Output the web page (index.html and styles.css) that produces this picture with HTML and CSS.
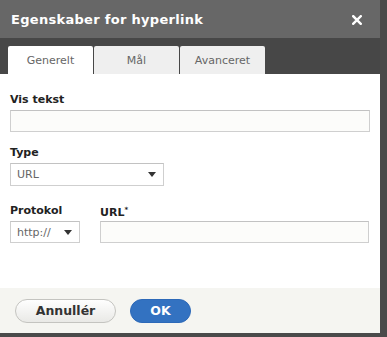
FILE: index.html
```html
<!DOCTYPE html>
<html lang="da">

<head>
    <meta charset="UTF-8">
    <title>Egenskaber for hyperlink</title>
    <link rel="stylesheet" href="styles.css">
</head>

<body>

    <section class="dialog">

        <header class="titlebar">
            <h1>Egenskaber for hyperlink</h1>
            <svg class="luk" width="10" height="10" viewBox="0 0 10 10">
                <path d="M1.2 1.2 L8.8 8.8 M8.8 1.2 L1.2 8.8" stroke="white" stroke-width="2.4" stroke-linecap="square" />
            </svg>
        </header>

        <nav class="tabs">
            <button class="tab valgt">Generelt</button>
            <button class="tab">Mål</button>
            <button class="tab">Avanceret</button>
        </nav>

        <section class="indhold">

            <label class="felt">
                <span class="etiket">Vis tekst</span>
                <span class="input bred"></span>
            </label>

            <label class="felt">
                <span class="etiket">Type</span>
                <span class="select type">URL <i class="pil"></i></span>
            </label>

            <div class="raekke">
                <label class="felt">
                    <span class="etiket">Protokol</span>
                    <span class="select protokol">http:// <i class="pil"></i></span>
                </label>
                <label class="felt url">
                    <span class="etiket">URL<sup>*</sup></span>
                    <span class="input"></span>
                </label>
            </div>

        </section>

        <footer class="knapper">
            <button class="knap annuller">Annullér</button>
            <button class="knap ok">OK</button>
        </footer>

    </section>

</body>

</html>
```

FILE: styles.css
```css
body {
    margin: 0;
    background-color: #4a4a4a;
    font-family: 'DejaVu Sans', sans-serif;
    width: 387px;
    height: 337px;
    overflow: hidden;
}

.dialog {
    width: 380px;
    height: 333px;
    display: flex;
    flex-direction: column;
    background-color: white;
}

.titlebar {
    height: 38px;
    background-color: #676767;
    display: flex;
    align-items: center;
    justify-content: space-between;
    padding: 0 18px 0 11px;
    color: white;
}

.titlebar h1 {
    margin: 0;
    font-size: 13px;
    font-weight: bold;
    letter-spacing: 0.3px;
}

.luk {
    margin-top: 1px;
}

.tabs {
    height: 36px;
    box-sizing: border-box;
    background-color: #474747;
    display: flex;
    align-items: flex-end;
    gap: 1px;
    padding-left: 8px;
}

.tab {
    width: 85px;
    height: 28px;
    border: 0;
    border-radius: 2px 2px 0 0;
    background-color: #efefef;
    color: #666;
    font-family: 'DejaVu Sans', sans-serif;
    font-size: 11px;
    padding: 0;
}

.tab.valgt {
    background-color: white;
}

.indhold {
    flex: 1;
    padding: 19px 10px 0 10px;
}

.felt {
    display: flex;
    flex-direction: column;
    margin-bottom: 14px;
}

.etiket {
    font-size: 11px;
    font-weight: bold;
    color: #222;
    height: 17px;
    line-height: 13px;
}

sup {
    font-size: 7px;
    vertical-align: 4px;
}

.input,
.select {
    box-sizing: border-box;
    height: 23px;
    border: 1px solid #cfcfcf;
    border-top-color: #c2c2c2;
    background-color: #fcfcfa;
}

.bred {
    width: 360px;
    height: 22px;
}

.select {
    display: flex;
    align-items: center;
    justify-content: space-between;
    padding: 0 7px 0 6px;
    font-size: 11px;
    color: #666;
    background-color: white;
}

.type {
    width: 154px;
}

.protokol {
    width: 70px;
    height: 22px;
}

.pil {
    width: 0;
    height: 0;
    border-left: 4px solid transparent;
    border-right: 4px solid transparent;
    border-top: 5px solid #333;
}

.raekke {
    display: flex;
    gap: 20px;
    padding-top: 4px;
}

.url {
    flex: 1;
    margin-right: 1px;
}

.url .input {
    width: 269px;
    height: 22px;
}

.knapper {
    height: 45px;
    background-color: #f5f5f1;
    display: flex;
    align-items: center;
    gap: 14px;
    padding-left: 15px;
}

.knap {
    height: 24px;
    border-radius: 12px;
    font-family: 'DejaVu Sans', sans-serif;
    font-size: 12.5px;
    font-weight: bold;
    padding: 0;
}

.annuller {
    width: 101px;
    border: 1px solid #c4c4c0;
    background: linear-gradient(#fefefe, #e9e9e6);
    color: #333;
}

.ok {
    width: 61px;
    border: 1px solid #2d69b8;
    background-color: #3372c1;
    color: white;
}
```
